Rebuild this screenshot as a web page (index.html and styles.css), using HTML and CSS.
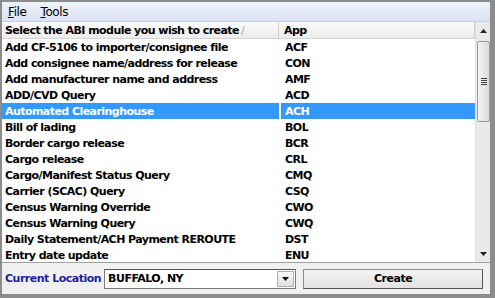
FILE: index.html
```html
<!DOCTYPE html>
<html lang="en">
<head>
    <meta charset="UTF-8">
    <title>ABI Module</title>
    <link rel="stylesheet" href="styles.css">
</head>
<body>
    <div class="window">
        <div class="menubar">
            <span class="menu-item"><u>F</u>ile</span>
            <span class="menu-item"><u>T</u>ools</span>
        </div>
        <div class="list-frame">
            <div class="list">
                <div class="row header">
                    <div class="cell name">Select the ABI module you wish to create <span class="sort">/</span></div>
                    <div class="cell app">App</div>
                </div>
                <div class="row"><div class="cell name">Add CF-5106 to importer/consignee file</div><div class="cell app">ACF</div></div>
                <div class="row"><div class="cell name">Add consignee name/address for release</div><div class="cell app">CON</div></div>
                <div class="row"><div class="cell name">Add manufacturer name and address</div><div class="cell app">AMF</div></div>
                <div class="row"><div class="cell name">ADD/CVD Query</div><div class="cell app">ACD</div></div>
                <div class="row selected"><div class="cell name">Automated Clearinghouse</div><div class="cell app">ACH</div></div>
                <div class="row"><div class="cell name">Bill of lading</div><div class="cell app">BOL</div></div>
                <div class="row"><div class="cell name">Border cargo release</div><div class="cell app">BCR</div></div>
                <div class="row"><div class="cell name">Cargo release</div><div class="cell app">CRL</div></div>
                <div class="row"><div class="cell name">Cargo/Manifest Status Query</div><div class="cell app">CMQ</div></div>
                <div class="row"><div class="cell name">Carrier (SCAC) Query</div><div class="cell app">CSQ</div></div>
                <div class="row"><div class="cell name">Census Warning Override</div><div class="cell app">CWO</div></div>
                <div class="row"><div class="cell name">Census Warning Query</div><div class="cell app">CWQ</div></div>
                <div class="row"><div class="cell name">Daily Statement/ACH Payment REROUTE</div><div class="cell app">DST</div></div>
                <div class="row"><div class="cell name">Entry date update</div><div class="cell app">ENU</div></div>
            </div>
            <div class="scrollbar">
                <div class="scroll-btn">
                    <svg width="7" height="4" viewBox="0 0 7 4"><path d="M0 4 L3.5 0 L7 4 Z" fill="#222"/></svg>
                </div>
                <div class="track">
                    <div class="thumb">
                        <div class="grip"></div>
                        <div class="grip"></div>
                        <div class="grip"></div>
                        <div class="grip"></div>
                    </div>
                </div>
                <div class="scroll-btn">
                    <svg width="7" height="4" viewBox="0 0 7 4"><path d="M0 0 L3.5 4 L7 0 Z" fill="#222"/></svg>
                </div>
            </div>
        </div>
        <div class="bottom">
            <label class="location-label">Current Location</label>
            <div class="combo">
                <div class="combo-value">BUFFALO, NY</div>
                <div class="combo-btn">
                    <svg width="7" height="4" viewBox="0 0 7 4"><path d="M0 0 L3.5 4 L7 0 Z" fill="#111"/></svg>
                </div>
            </div>
            <button class="create-button">Create</button>
        </div>
    </div>
</body>
</html>
```

FILE: styles.css
```css
* {
    margin: 0;
    padding: 0;
    box-sizing: border-box;
}

body {
    background-color: #ffffff;
    font-family: "DejaVu Sans", Verdana, sans-serif;
}

.window {
    width: 495px;
    height: 298px;
    border-style: solid;
    border-color: #8c8c8c;
    border-width: 2px 5px 4px 2px;
    background-color: #f0f0f0;
    display: flex;
    flex-direction: column;
}

.menubar {
    height: 20px;
    flex-shrink: 0;
    background: linear-gradient(#eef2fa, #dbe3f3);
    display: flex;
    align-items: center;
    gap: 14px;
    padding-left: 6px;
    font-size: 12px;
    letter-spacing: -0.4px;
    color: #000;
    border-bottom: 1px solid #c9d1e0;
}

.list-frame {
    height: 241px;
    flex-shrink: 0;
    display: flex;
    background-color: #fff;
    border-bottom: 1px solid #a0a0a0;
}

.list {
    flex: 1;
    overflow: hidden;
}

.row {
    display: flex;
    height: 16px;
    align-items: center;
    font-size: 11px;
    font-weight: bold;
    letter-spacing: -0.55px;
    color: #000;
    white-space: nowrap;
}

.cell {
    height: 100%;
    display: flex;
    align-items: center;
}

.cell.name {
    width: 277px;
    padding-left: 3px;
}

.cell.app {
    flex: 1;
    padding-left: 4px;
    margin-left: 2px;
}

.row.header {
    height: 17px;
    background: linear-gradient(#fafafa, #ececec);
    border-bottom: 1px solid #d5d5d5;
}

.row.header .cell.name {
    border-right: 1px solid #d0d0d0;
    margin-right: 1px;
}

.row.header .cell.app {
    margin-left: 0;
    border-right: 1px solid #d0d0d0;
}

.sort {
    color: #aaa;
    font-weight: normal;
    margin-left: 2px;
}

.row.selected .cell {
    background-color: #3399ff;
    color: #fff;
}

.scrollbar {
    width: 15px;
    background-color: #eaeaea;
    border-left: 1px solid #e0e0e0;
    display: flex;
    flex-direction: column;
}

.scroll-btn {
    height: 17px;
    display: flex;
    align-items: center;
    justify-content: center;
}

.track {
    flex: 1;
}

.thumb {
    margin: 2px 0 0 1px;
    width: 13px;
    height: 81px;
    border: 1px solid #9a9a9a;
    border-radius: 2px;
    background: linear-gradient(90deg, #f3f3f3, #dcdcdc);
    display: flex;
    flex-direction: column;
    justify-content: center;
    align-items: center;
    gap: 1px;
}

.grip {
    width: 6px;
    height: 1px;
    background-color: #444;
}

.bottom {
    flex: 1;
    display: flex;
    align-items: center;
    padding: 0 6px 0 3px;
    gap: 3px;
}

.location-label {
    font-size: 11px;
    font-weight: bold;
    letter-spacing: -0.5px;
    color: #1f1f9e;
    white-space: nowrap;
}

.combo {
    width: 192px;
    height: 20px;
    border: 1px solid #7a7a7a;
    border-top-color: #555;
    background-color: #fff;
    display: flex;
    align-items: center;
}

.combo-value {
    flex: 1;
    font-size: 11px;
    font-weight: bold;
    letter-spacing: -0.5px;
    padding-left: 3px;
}

.combo-btn {
    width: 17px;
    height: 16px;
    margin-right: 1px;
    border: 1px solid #b0b0b0;
    background: linear-gradient(#f6f6f6, #e0e0e0);
    display: flex;
    align-items: center;
    justify-content: center;
}

.create-button {
    margin-left: 4px;
    width: 180px;
    height: 20px;
    font-family: "DejaVu Sans", Verdana, sans-serif;
    font-size: 11px;
    font-weight: bold;
    letter-spacing: -0.5px;
    color: #000;
    background: linear-gradient(#f4f4f4, #e2e2e2);
    border: 1px solid #8a8a8a;
    border-right-color: #555;
    border-bottom-color: #555;
}
```
